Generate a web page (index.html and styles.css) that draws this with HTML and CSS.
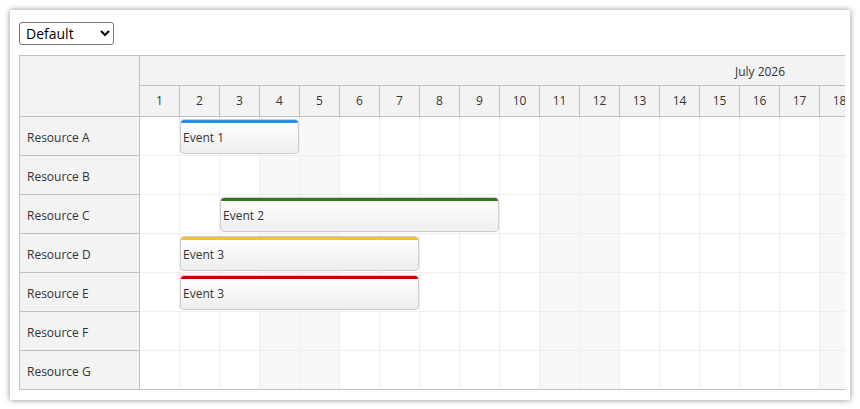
FILE: index.html
```html
<!DOCTYPE html>
<html lang="en">
  <head>
    <meta charset="UTF-8" />
    <meta name="viewport" content="width=device-width, initial-scale=1.0" />
    <title>Scheduler</title>
    <link rel="stylesheet" href="styles.css">
  </head>
  <body>
    <div class="panel">
      <select class="view">
        <option>Default</option>
        <option>Compact</option>
      </select>

      <div class="scheduler">
        <!-- left column: corner + resource names -->
        <div class="resources">
          <div class="corner"></div>
          <div class="res">Resource A</div>
          <div class="res">Resource B</div>
          <div class="res">Resource C</div>
          <div class="res">Resource D</div>
          <div class="res">Resource E</div>
          <div class="res">Resource F</div>
          <div class="res last">Resource G</div>
        </div>

        <!-- timeline: header + rows (month is 31 days wide, only the start is visible) -->
        <div class="timeline">
          <div class="month">July 2026</div>
          <div class="days">
            <div>1</div><div>2</div><div>3</div><div>4</div><div>5</div><div>6</div>
            <div>7</div><div>8</div><div>9</div><div>10</div><div>11</div><div>12</div>
            <div>13</div><div>14</div><div>15</div><div>16</div><div>17</div><div>18</div>
          </div>
          <div class="row">
            <div class="event blue" style="grid-column: 2 / 5">Event 1</div>
          </div>
          <div class="row"></div>
          <div class="row">
            <div class="event green" style="grid-column: 3 / 10">Event 2</div>
          </div>
          <div class="row">
            <div class="event yellow" style="grid-column: 2 / 8">Event 3</div>
          </div>
          <div class="row">
            <div class="event red" style="grid-column: 2 / 8">Event 3</div>
          </div>
          <div class="row"></div>
          <div class="row last"></div>
        </div>
      </div>
    </div>
  </body>
</html>
```

FILE: styles.css
```css
* {
  margin: 0;
  padding: 0;
  box-sizing: border-box;
}
body {
  padding: 10px;
  background: #fff;
  font-family: "Open Sans", "Noto Sans", sans-serif;
  color: #333;
}
.panel {
  width: 840px;
  height: 390px;
  padding: 12px 9px 0 9px;
  background: #fff;
  box-shadow: 0 0 6px rgba(0, 0, 0, 0.45);
}
.view {
  display: block;
  width: 95px;
  height: 23px;
  padding-left: 2px;
  border: 1px solid #767676;
  border-radius: 3px;
  background: #fff;
  color: #000;
  font-family: "Open Sans", "Noto Sans", sans-serif;
  font-size: 14px;
}
.scheduler {
  display: flex;
  width: 826px;
  margin-top: 10px;
  border-top: 1px solid #c0c0c0;
  border-bottom: 1px solid #c0c0c0;
  border-left: 1px solid #c0c0c0;
  overflow: hidden;
  font-size: 12px;
}
/* resource column */
.resources {
  flex: 0 0 120px;
  background: #f3f3f3;
  border-right: 1px solid #c0c0c0;
}
.corner {
  height: 61px;
  border-bottom: 1px solid #c0c0c0;
}
.res {
  display: flex;
  align-items: center;
  height: 39px;
  padding: 2px 0 0 7px;
  border-bottom: 1px solid #c0c0c0;
}
.res.last {
  height: 38px;
  border-bottom: none;
}
/* timeline */
.timeline {
  flex: 0 0 1240px;
}
.month {
  height: 30px;
  line-height: 31px;
  text-align: center;
  background: #f3f3f3;
  border-bottom: 1px solid #c0c0c0;
}
.days {
  display: flex;
  height: 31px;
  background: #f3f3f3;
  border-bottom: 1px solid #c0c0c0;
}
.days > div {
  flex: 0 0 40px;
  line-height: 30px;
  text-align: center;
  border-right: 1px solid #c0c0c0;
}
.row {
  display: grid;
  grid-template-columns: repeat(31, 40px);
  grid-template-rows: 38px;
  height: 39px;
  border-bottom: 1px solid #eee;
  /* vertical cell lines + weekend columns (4/5, 11/12 ...) */
  background-image:
    linear-gradient(to right, transparent 39px, #eee 39px),
    repeating-linear-gradient(to right, #fff 0 120px, #f8f8f8 120px 200px, #fff 200px 280px);
  background-size: 40px 100%, 100% 100%;
}
.row.last {
  height: 38px;
  border-bottom: none;
}
.event {
  grid-row: 1;
  margin: 2px 1px 1px 0;
  padding: 2px 0 0 2px;
  display: flex;
  align-items: center;
  border: 1px solid #ccc;
  border-radius: 4px;
  background: linear-gradient(#fff, #eee);
  color: #333;
  overflow: hidden;
  position: relative;
}
.event::before {
  content: "";
  position: absolute;
  left: -1px;
  right: -1px;
  top: -1px;
  height: 4px;
  border-radius: 4px 4px 0 0;
}
.blue::before { background: #2b8fe3; }
.green::before { background: #38761d; }
.yellow::before { background: #f1c232; }
.red::before { background: #cc0000; }
```
